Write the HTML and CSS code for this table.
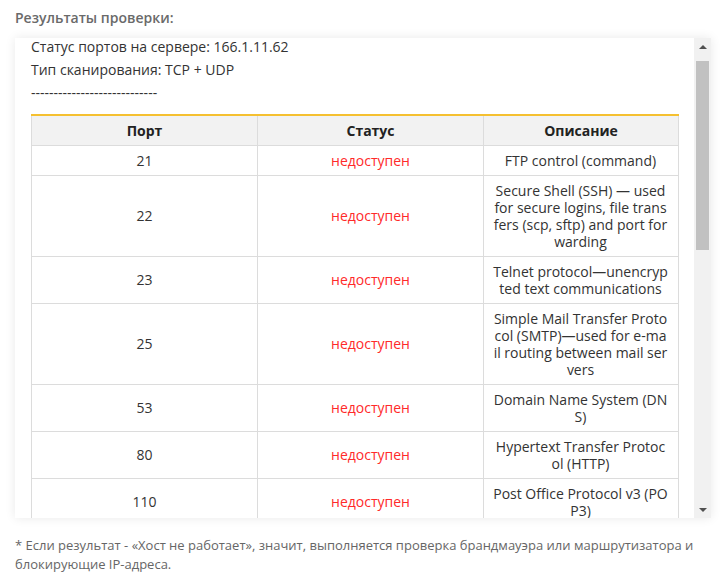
FILE: index.html
```html
<!DOCTYPE html>
<html lang="ru">
<head>
<meta charset="utf-8">
<link rel="stylesheet" href="styles.css">
</head>
<body>
<div class="page">
  <div class="title">Результаты проверки:</div>
  <div class="box">
    <div class="content">
      <div class="line">Статус портов на сервере: 166.1.11.62</div>
      <div class="line">Тип сканирования: TCP + UDP</div>
      <div class="line">----------------------------</div>
      <table class="ports">
        <colgroup><col class="c1"><col class="c2"><col class="c3"></colgroup>
        <thead>
          <tr><th>Порт</th><th>Статус</th><th>Описание</th></tr>
        </thead>
        <tbody>
          <tr><td>21</td><td class="bad">недоступен</td><td class="desc">FTP control (command)</td></tr>
          <tr><td>22</td><td class="bad">недоступен</td><td class="desc">Secure Shell (SSH) — used for secure logins, file transfers (scp, sftp) and port forwarding</td></tr>
          <tr><td>23</td><td class="bad">недоступен</td><td class="desc">Telnet protocol—unencrypted text communications</td></tr>
          <tr><td>25</td><td class="bad">недоступен</td><td class="desc">Simple Mail Transfer Protocol (SMTP)—used for e-mail routing between mail servers</td></tr>
          <tr><td>53</td><td class="bad">недоступен</td><td class="desc">Domain Name System (DNS)</td></tr>
          <tr><td>80</td><td class="bad">недоступен</td><td class="desc">Hypertext Transfer Protocol (HTTP)</td></tr>
          <tr><td>110</td><td class="bad">недоступен</td><td class="desc">Post Office Protocol v3 (POP3)</td></tr>
        </tbody>
      </table>
    </div>
    <div class="scrollbar">
      <div class="arrow up"></div>
      <div class="track"><div class="thumb"></div></div>
      <div class="arrow down"></div>
    </div>
  </div>
  <p class="note">* Если результат - «Хост не работает», значит, выполняется проверка брандмауэра или маршрутизатора и блокирующие IP-адреса.</p>
</div>
</body>
</html>
```
FILE: styles.css
```css
html, body {
  margin: 0;
  padding: 0;
  background: #fff;
}
.page {
  padding: 8px 10px 0 15px;
  font-family: "Open Sans", "Liberation Sans", sans-serif;
  color: #333;
}
.title {
  font-size: 14px;
  font-weight: 600;
  line-height: 20px;
  color: #6a6a6a;
  margin-bottom: 10px;
}
.box {
  display: flex;
  width: 696px;
  height: 480px;
  background: #fff;
  box-shadow: 0 0 10px rgba(0, 0, 0, 0.09);
  overflow: hidden;
}
.content {
  flex: 1;
  padding: 0 16px;
  overflow: hidden;
}
.line {
  font-size: 14px;
  line-height: 20px;
  margin-bottom: 3px;
  color: #333;
}
.line:first-child {
  margin-top: -1px;
}
.ports {
  margin-top: 11px;
  width: 647px;
  border-collapse: collapse;
  table-layout: fixed;
  border-top: 2px solid #f5c030;
  font-size: 14px;
  line-height: 17px;
}
.c1 { width: 226px; }
.c2 { width: 226px; }
.c3 { width: 195px; }
.ports th {
  background: #f2f2f2;
  font-weight: 700;
  color: #222;
  border: 1px solid #dcdcdc;
  border-top: none;
  height: 30px;
  padding: 0 8px;
  box-sizing: border-box;
}
.ports td {
  border: 1px solid #dcdcdc;
  padding: 6px 8px;
  text-align: center;
  vertical-align: middle;
  color: #333;
}
.ports td.bad {
  color: #ff2a2a;
}
.ports td.desc {
  word-break: break-all;
  vertical-align: top;
  padding-left: 9px;
  padding-right: 10px;
}
.scrollbar {
  width: 17px;
  flex: none;
  background: #f1f1f1;
  display: flex;
  flex-direction: column;
  align-items: center;
}
.arrow {
  height: 17px;
  width: 17px;
  flex: none;
  display: flex;
  align-items: center;
  justify-content: center;
}
.arrow::after {
  content: "";
  width: 0;
  height: 0;
  border-left: 4px solid transparent;
  border-right: 4px solid transparent;
}
.up::after {
  border-bottom: 4px solid #505050;
}
.down::after {
  border-top: 4px solid #505050;
}
.track {
  flex: 1;
  width: 100%;
  padding: 6px 2px 0;
  box-sizing: border-box;
}
.thumb {
  height: 189px;
  background: #c1c1c1;
}
.note {
  margin: 18px 0 0;
  font-size: 13px;
  line-height: 19px;
  color: #666;
  width: 680px;
}
```
